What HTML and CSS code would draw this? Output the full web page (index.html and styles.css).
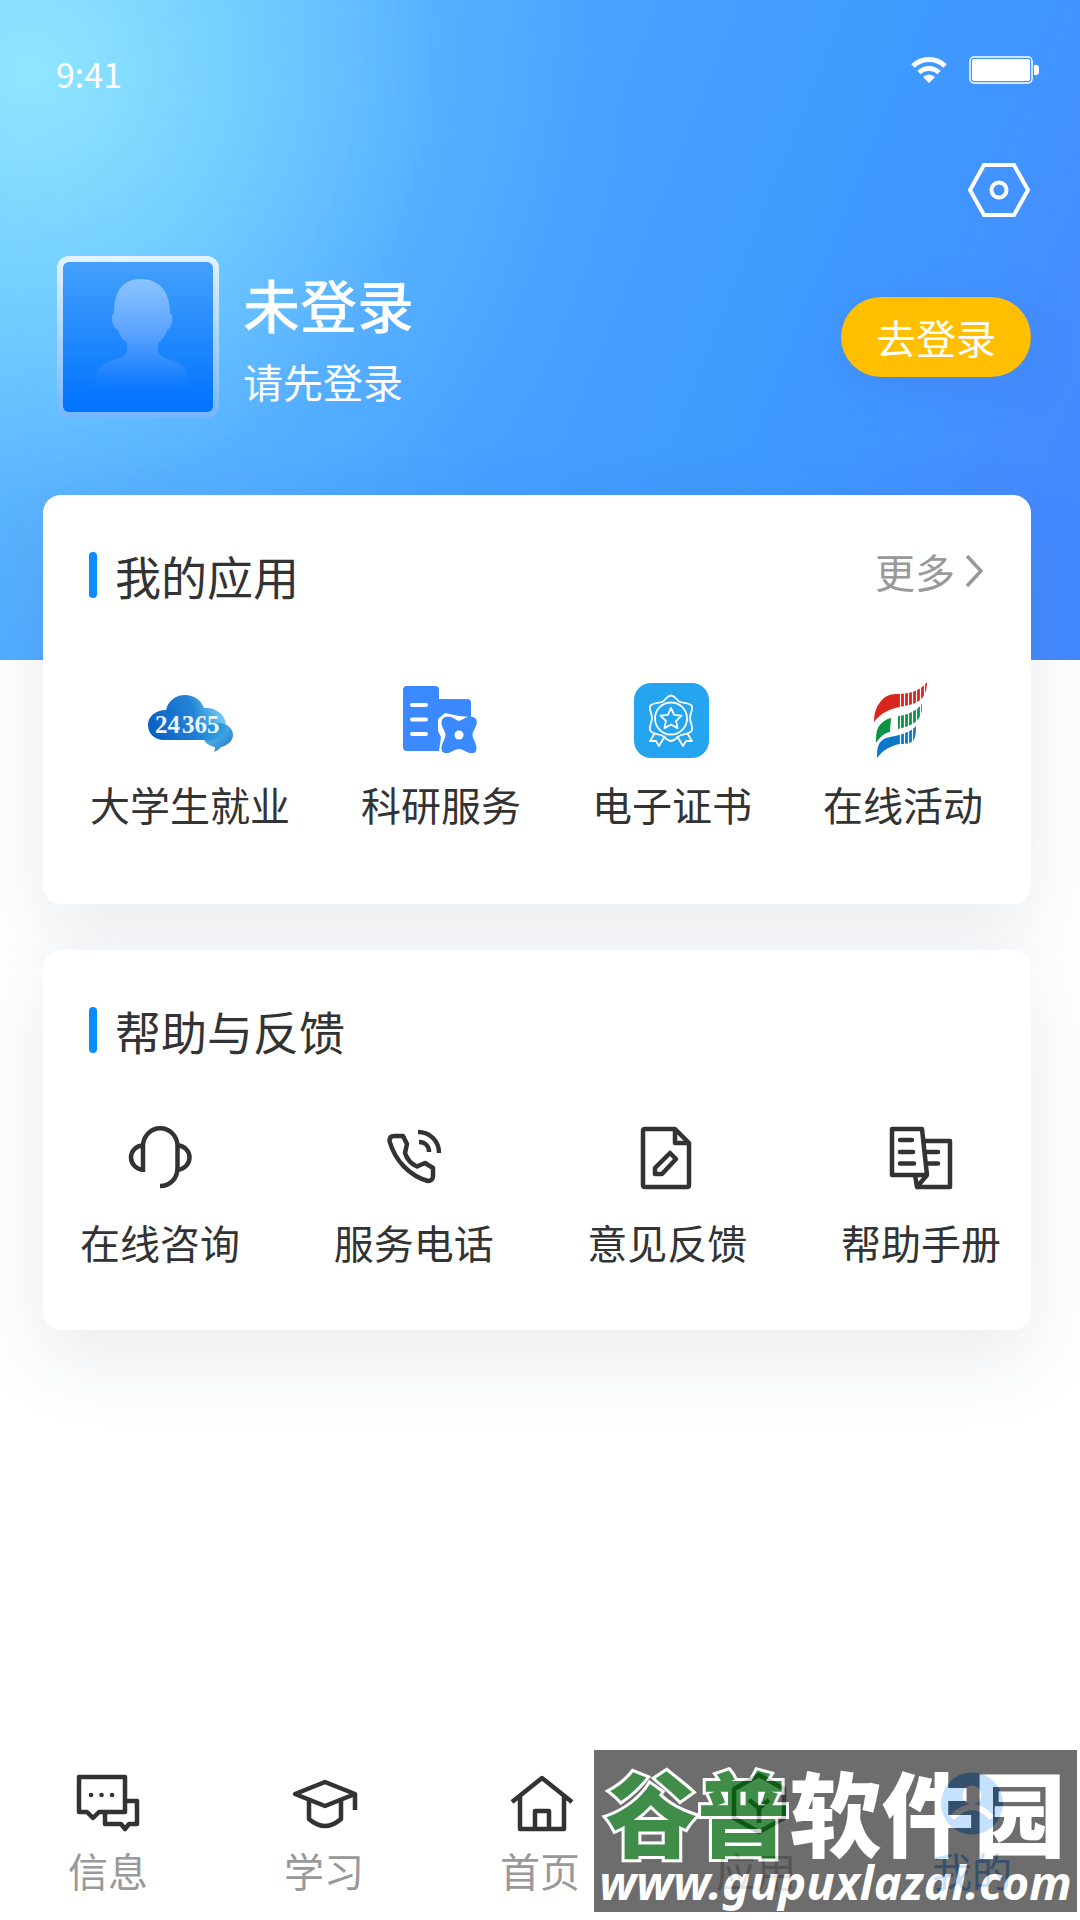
FILE: index.html
```html
<!DOCTYPE html>
<html lang="zh-CN">
<head>
    <meta charset="UTF-8">
    <meta name="viewport" content="width=device-width, initial-scale=1.0">
    <title>我的</title>
    <link rel="stylesheet" href="styles.css">
</head>
<body>
    <div class="page">
        <header>
            <div class="status-bar">
                <span class="time">9:41</span>
                <div class="status-icons">
                    <svg width="36" height="26" viewBox="0 0 36 26" fill="none" stroke="#fff" stroke-width="5">
                        <path d="M2 9a23 23 0 0 1 32 0M8 15.500a14.500 14.500 0 0 1 20 0"/>
                        <path d="M18 26l-6-6q6-5 12 0z" fill="#fff" stroke="none"/>
                    </svg>
                    <svg width="70" height="28" viewBox="0 0 70 28">
                        <rect x="1" y="1" width="62" height="26" rx="4" fill="none" stroke="#fff" stroke-width="1.500"/>
                        <rect x="3" y="3" width="58" height="22" rx="2" fill="#fff"/>
                        <path d="M65 9h2q3 0 3 3v4q0 3-3 3h-2z" fill="#fff"/>
                    </svg>
                </div>
            </div>

            <div class="toolbar">
                <button class="settings" type="button" aria-label="设置">
                    <svg width="64" height="56" viewBox="0 0 64 56" fill="none" stroke="#fff" stroke-width="4">
                        <path d="M17 3h30l14 25-14 25H17L3 28z"/>
                        <circle cx="32" cy="28" r="7.500"/>
                    </svg>
                </button>
            </div>

            <div class="profile">
                <div class="avatar">
                    <svg viewBox="0 0 150 150">
                        <defs>
                            <linearGradient id="person" x1="0" y1="0" x2="0" y2="1">
                                <stop offset="0" stop-color="#8cc4ff"/>
                                <stop offset="0.500" stop-color="#5aa2ff"/>
                                <stop offset="1" stop-color="#0a78ff"/>
                            </linearGradient>
                        </defs>
                        <path fill="url(#person)" d="M78 17c18 0 29 12 29 34 4 2 3 15-3 17-2 6-4 9-9 13v8c2 12 31 5 31 30v7H32v-7c0-25 30-18 32-30v-8c-5-4-7-7-9-13-6-2-8-15-4-17 0-22 9-34 27-34z"/>
                    </svg>
                </div>
                <div class="user">
                    <h1>未登录</h1>
                    <p>请先登录</p>
                </div>
                <button class="login" type="button">去登录</button>
            </div>
        </header>

        <main>
            <section class="card apps">
                <div class="card-head">
                    <h2>我的应用</h2>
                    <a class="more" href="#">更多
                        <svg width="18" height="34" viewBox="0 0 18 34" fill="none" stroke="#999" stroke-width="3.500">
                            <path d="M2 2l14 15L2 32"/>
                        </svg>
                    </a>
                </div>
                <div class="app-list">
                    <a class="item" href="#">
                        <svg viewBox="0 0 84 84">
                            <defs>
                                <linearGradient id="cloud" x1="0" y1="0.600" x2="1" y2="0.400">
                                    <stop offset="0" stop-color="#0a5fc4"/>
                                    <stop offset="0.600" stop-color="#2384d4"/>
                                    <stop offset="1" stop-color="#7fd4fa"/>
                                </linearGradient>
                                <linearGradient id="bubble" x1="0" y1="0" x2="1" y2="1">
                                    <stop offset="0" stop-color="#1583cf"/>
                                    <stop offset="0.500" stop-color="#2f9ae0"/>
                                    <stop offset="1" stop-color="#0a62b8"/>
                                </linearGradient>
                            </defs>
                            <path fill="url(#cloud)" d="M16 61C6 61 0 54 0 46s7-15 18-15c2-9 10-15 19-15s16 5 19 13c12-1 22 7 22 17 0 9-7 15-16 15z"/>
                            <path fill="url(#bubble)" opacity="0.900" d="M70 44c9 0 15 5 15 12 0 6-6 11-12 12-2 2-4 4-7 5 1-2 1-4 1-5-7-1-12-6-12-12 0-7 7-12 15-12z"/>
                            <text x="7" y="54" class="cloud-text">24</text>
                            <text x="34" y="54" class="cloud-text">365</text>
                        </svg>
                        <span>大学生就业</span>
                    </a>
                    <a class="item" href="#">
                        <svg viewBox="0 0 84 84">
                            <path fill="#3a89fe" d="M8 7h28q4 0 4 4v9h28q4 0 4 4v48H8q-4 0-4-4V11q0-4 4-4z"/>
                            <path d="M13 26h14M13 40.500h14M13 55h14" stroke="#fff" stroke-width="4" stroke-linecap="round"/>
                            <path fill="#fff" d="M60 37l-14-3-7 6v12l3 6-2 14v6h32V38z"/>
                            <path fill="#3a89fe" d="M60 42c5-2 9-6 14-4 6 2 4 8 1 13-2 4-2 6 0 10 3 6 4 12-1 13-6 1-9-4-14-4s-8 5-14 4c-5-1-4-7-1-13 2-4 2-6 0-10-3-5-4-11 1-13 6-2 9 2 14 4z"/>
                            <circle cx="60" cy="56" r="4.500" fill="#fff"/>
                        </svg>
                        <span>科研服务</span>
                    </a>
                    <a class="item" href="#">
                        <svg viewBox="0 0 84 84" fill="none" stroke="#fff" stroke-width="1.800" stroke-linejoin="round">
                            <rect x="4" y="4" width="75" height="75" rx="17" fill="#25a4f0" stroke="none"/>
                            <path d="M41 16.500c4 0 5 4 8 6s12 1 13 5-2 7-2 11.500 3 8 2 12-9 4-12 5.500-5 5.500-9 5.500-6-4-9-5.500-11-1.500-12-5.500 2-7.500 2-12-3-7.500-2-11.500 10-3 13-5 4-6 8-6z"/>
                            <circle cx="41" cy="39.500" r="16"/>
                            <path d="M41 29l3.200 6.900 7.300.8-5.400 5.100 1.400 7.400-6.500-3.700-6.500 3.700 1.400-7.400-5.400-5.100 7.300-.8z"/>
                            <path d="M25 54l-5 8h6l3 5 6-10M57 54l5 8h-6l-3 5-6-10"/>
                        </svg>
                        <span>电子证书</span>
                    </a>
                    <a class="item" href="#">
                        <svg viewBox="0 0 84 84">
                            <path fill="#d9251d" d="M13 43c0-10 3-17 8-22 5-6 12-6 18-6 11-1 20-3 27-12 0 6-1 11-4 15-7 8-15 8-23 10-11 2-19 6-26 15z"/>
                            <path fill="#0d9346" d="M15 64c0-7 0-12 3-17 3-4 7-7 12-8l-1 14c-6 1-10 5-14 11zM37 37c10-1 18-5 24-12 0 6 0 10-3 14-5 7-13 9-21 11z"/>
                            <path fill="#0a78c8" d="M16 79c0-6 0-10 2-14 3-5 7-6 11-7 10-2 19-4 26-11 0 6 0 11-3 15-4 3-8 3-13 3-10 2-17 6-23 14z"/>
                            <path stroke="#fff" stroke-width="1.200" d="M39.500 10v62M43.500 10v62M47.500 8v62M51.500 6v60M55.500 4v60M59.500 2v44M63.500 0v40"/>
                        </svg>
                        <span>在线活动</span>
                    </a>
                </div>
            </section>

            <section class="card help">
                <div class="card-head">
                    <h2>帮助与反馈</h2>
                </div>
                <div class="help-list">
                    <a class="item" href="#">
                        <svg class="line" viewBox="0 0 64 64">
                            <path d="M15 46V20a17 17.500 0 0 1 34.500 0V42c0 11-8 18-17.500 18"/>
                            <path d="M15 19.500A12 12 0 0 0 15 43.500M49.500 19.500a12 12 0 0 1 0 24"/>
                        </svg>
                        <span>在线咨询</span>
                    </a>
                    <a class="item" href="#">
                        <svg class="line" viewBox="0 0 64 64">
                            <path d="M12 10h9l4 8-2 9c2 6 6 11 12 13.500l8-3.500 8 5v8c0 3-2 5-5 5C28 50 13 35 7.500 15q0-5 4.500-5z"/>
                            <path d="M36 6c12 0 21 9 21 21M37 16c6 0 10 4 10 10"/>
                        </svg>
                        <span>服务电话</span>
                    </a>
                    <a class="item" href="#">
                        <svg class="line" viewBox="0 0 64 64">
                            <path d="M40 3H10q-2 0-2 2v54q0 2 2 2h42q2 0 2-2V17zM40 3v14h14"/>
                            <path d="M35 27l6 6-14 15h-7v-6z"/>
                        </svg>
                        <span>意见反馈</span>
                    </a>
                    <a class="item" href="#">
                        <svg class="line" viewBox="0 0 64 64">
                            <path d="M3 3h30l5 46H3zM38 49L28 61l-2-12M35 15h26v46H28"/>
                            <path stroke-linecap="round" d="M11 14h12M11 26h13M11 37.500h14M38 26h11M39 37.500h10"/>
                        </svg>
                        <span>帮助手册</span>
                    </a>
                </div>
            </section>
        </main>

        <nav class="tabs">
            <a href="#">
                <svg class="line" viewBox="0 0 64 64">
                    <path d="M3 5h46v35H23l-6 6-6-6H3z"/>
                    <path d="M50 29h11v23h-8l-4 5-4-5H29V40"/>
                    <path stroke-linecap="round" d="M15 23h.1M25.500 23h.1M36 23h.1"/>
                </svg>
                <span>信息</span>
            </a>
            <a href="#">
                <svg class="line" viewBox="0 0 64 64">
                    <path d="M3 22l30-12 30 12-30 12zM63 22v16"/>
                    <path d="M17 28v19q16 14 32 0V28"/>
                </svg>
                <span>学习</span>
            </a>
            <a href="#">
                <svg class="line" viewBox="0 0 64 64">
                    <path d="M4 30L34 6l30 24M12 24v33h44V24M27 57V39h14v18"/>
                </svg>
                <span>首页</span>
            </a>
            <a href="#">
                <svg class="line" viewBox="0 0 64 64">
                    <path d="M35 3l25 14v29L35 60 10 46V17zM35 51V36l-10-8M35 36l10-8"/>
                </svg>
                <span>应用</span>
            </a>
            <a class="active" href="#">
                <svg viewBox="0 0 64 64">
                    <circle cx="32" cy="31.500" r="31" fill="#1989fa"/>
                    <circle cx="32" cy="23" r="9.500" fill="#fff"/>
                    <path d="M12 46q20-22 40 0" fill="none" stroke="#fff" stroke-width="6"/>
                </svg>
                <span>我的</span>
            </a>
        </nav>

        <div class="watermark">
            <p class="brand"><em>谷普</em>软件园</p>
            <p class="url">www.gupuxlazal.com</p>
        </div>
    </div>
</body>
</html>
```
FILE: styles.css
```css
* {
    box-sizing: border-box;
}

body {
    margin: 0;
    font-family: "Noto Sans CJK SC", sans-serif;
    font-size: 40px;
    line-height: 52px;
    color: #333;
    background-color: #fff;
}

h1, h2, p {
    margin: 0;
}

a {
    color: inherit;
    text-decoration: none;
}

button {
    border: none;
    padding: 0;
    font-family: inherit;
    cursor: pointer;
}

svg {
    display: block;
    overflow: visible;
}

.page {
    position: relative;
    display: flex;
    flex-direction: column;
    min-height: 100vh;
    background:
        radial-gradient(ellipse 600px 620px at 30px 70px, #90e6ff, rgba(130, 220, 255, 0.7) 35%, rgba(110, 196, 255, 0.3) 70%, rgba(90, 180, 255, 0)) no-repeat 0 0 / 100% 660px,
        linear-gradient(112deg, #5ab4ff 0%, #49a4ff 38%, #3f9aff 70%, #448bff 92%, #4489ff 100%) no-repeat 0 0 / 100% 660px;
}

.status-bar {
    display: flex;
    justify-content: space-between;
    align-items: flex-start;
    padding: 48px 41px 0 56px;
    color: #fff;
}

.time {
    font-size: 34px;
}

.status-icons {
    display: flex;
    align-items: center;
    gap: 22px;
    height: 44px;
}

.toolbar {
    display: flex;
    justify-content: flex-end;
    padding: 62px 49px 38px;
}

.settings {
    background: none;
}

.profile {
    display: flex;
    align-items: center;
    gap: 24px;
    padding: 0 49px 0 57px;
    color: #fff;
}

.avatar {
    width: 162px;
    height: 162px;
    border: 6px solid transparent;
    border-radius: 12px;
    background:
        linear-gradient(#44a0fb, #0072ff) padding-box,
        linear-gradient(#e4f3ff, #74b6ff) border-box;
}

.user {
    flex: 1;
}

.user h1 {
    font-size: 57px;
    font-weight: 500;
    line-height: 72px;
}

.user p {
    margin-top: 16px;
}

.login {
    width: 190px;
    height: 80px;
    border-radius: 40px;
    font-size: 40px;
    color: #fff;
    background-color: #ffbe00;
    box-shadow: 0 8px 40px rgba(70, 120, 220, 0.4);
}

main {
    display: flex;
    flex-direction: column;
    gap: 46px;
    padding: 77px 49px 60px 43px;
}

.card {
    padding-top: 50px;
    border-radius: 18px;
    background-color: #fff;
    box-shadow: 0 28px 80px rgba(40, 60, 90, 0.1);
}

.card-head {
    display: flex;
    justify-content: space-between;
    align-items: flex-start;
    padding: 0 48px 0 46px;
}

.card-head h2 {
    display: flex;
    align-items: center;
    gap: 18px;
    font-size: 46px;
    font-weight: 400;
    line-height: 60px;
}

.card-head h2::before {
    content: "";
    width: 8px;
    height: 46px;
    border-radius: 4px;
    background-color: #0a8cff;
}

.more {
    display: flex;
    align-items: center;
    gap: 10px;
    color: #999;
}

.app-list, .help-list {
    display: flex;
    justify-content: space-between;
}

.app-list {
    padding: 74px 48px 74px 47px;
}

.help-list {
    padding: 66px 30px 62px 37px;
}

.item {
    display: flex;
    flex-direction: column;
    align-items: center;
}

.app-list .item {
    gap: 15px;
}

.app-list svg {
    width: 84px;
    height: 84px;
}

.help-list .item {
    gap: 26px;
}

.help-list svg, .tabs svg {
    width: 64px;
    height: 64px;
}

.line {
    fill: none;
    stroke: #333;
    stroke-width: 4.5;
    stroke-linejoin: round;
}

.cloud-text {
    font-family: "Liberation Serif", serif;
    font-size: 25px;
    font-weight: bold;
    fill: #eaf7ff;
}

/* bottom navigation */
.tabs {
    display: flex;
    margin-top: auto;
    padding-bottom: 24px;
    color: #999;
}

.tabs a {
    flex: 1;
    display: flex;
    flex-direction: column;
    align-items: center;
    gap: 8px;
}

.tabs .active {
    color: #1989fa;
}

.watermark {
    position: absolute;
    right: 3px;
    bottom: 8px;
    width: 483px;
    height: 162px;
    background-color: #3d3d3d;
    color: #fff;
    text-align: center;
    white-space: nowrap;
    opacity: 0.75;
}

.brand {
    padding-top: 12px;
    font-size: 92px;
    font-weight: 900;
    line-height: 96px;
}

.brand em {
    font-style: normal;
    color: #00670c;
    -webkit-text-stroke: 6px #fff;
    paint-order: stroke fill;
}

.url {
    font-family: "Noto Sans", sans-serif;
    font-size: 47px;
    font-weight: bold;
    font-style: italic;
    line-height: 48px;
}
```
